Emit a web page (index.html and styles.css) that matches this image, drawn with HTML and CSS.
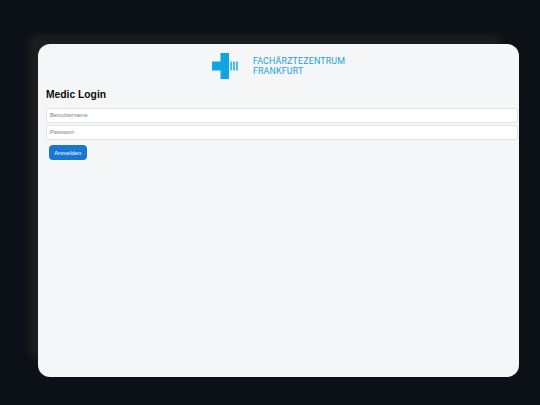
FILE: index.html
```html
<!DOCTYPE html>
<html lang="de">
<head>
<meta charset="utf-8">
<title>Medic Login</title>
<link rel="stylesheet" href="styles.css">
</head>
<body>
<main class="card">
  <header class="logo">
    <svg class="logo-mark" width="26" height="26" viewBox="0 0 26 26">
      <rect x="0" y="8.500" width="9" height="9" fill="#0ea5e0"/>
      <rect x="8.500" y="0" width="8.500" height="26" fill="#0ea5e0"/>
      <rect x="18.200" y="8.500" width="2" height="9" fill="#4dbbe8"/>
      <rect x="21.100" y="8.500" width="2" height="9" fill="#4dbbe8"/>
      <rect x="24" y="8.500" width="2" height="9" fill="#4dbbe8"/>
    </svg>
    <div class="logo-text">FACHÄRZTEZENTRUM<br>FRANKFURT</div>
  </header>
  <h1 class="title">Medic Login</h1>
  <form class="form">
    <input class="field" type="text" placeholder="Benutzername">
    <input class="field" type="password" placeholder="Passwort">
    <button class="submit" type="button">Anmelden</button>
  </form>
</main>
</body>
</html>
```
FILE: styles.css
```css
* { box-sizing: border-box; }
html, body { height: 100%; }
body {
  margin: 0;
  padding: 44px 21px 28px 38px;
  background: #0c1118;
  font-family: "Liberation Sans", Arial, sans-serif;
}
.card {
  height: 333px;
  padding: 9px 0 0 8px;
  background: #f4f6f8;
  border-radius: 12px;
  box-shadow: -14px -14px 7px -5px rgba(42, 38, 36, 0.6);
}
.logo {
  display: flex;
  align-items: center;
  justify-content: center;
  gap: 15px;
  height: 26px;
  padding-right: 8px;
}
.logo-mark { display: block; flex: none; }
.logo-text {
  font-family: Roboto, sans-serif;
  font-size: 8.900px;
  line-height: 10px;
  letter-spacing: 0.150px;
  color: #1ea3d8;
}
.title {
  margin: 9px 0 6px;
  font-size: 10.300px;
  line-height: 14px;
  font-weight: 700;
  color: #0b0b0b;
}
.form {
  display: flex;
  flex-direction: column;
  align-items: flex-start;
  gap: 2.500px;
}
.field {
  width: 472px;
  height: 14.500px;
  padding: 0 3px;
  background: #fff;
  border: 1px solid #dfe2e6;
  border-radius: 3px;
  font-family: inherit;
  font-size: 5.800px;
  outline: none;
}
.field::placeholder { color: #808080; opacity: 1; }
.submit {
  width: 38.500px;
  height: 15px;
  margin: 3px 0 0 2.500px;
  padding: 0;
  background: #1976d2;
  border: 0;
  border-radius: 4px;
  color: #fff;
  font-family: inherit;
  font-size: 6px;
}
```
